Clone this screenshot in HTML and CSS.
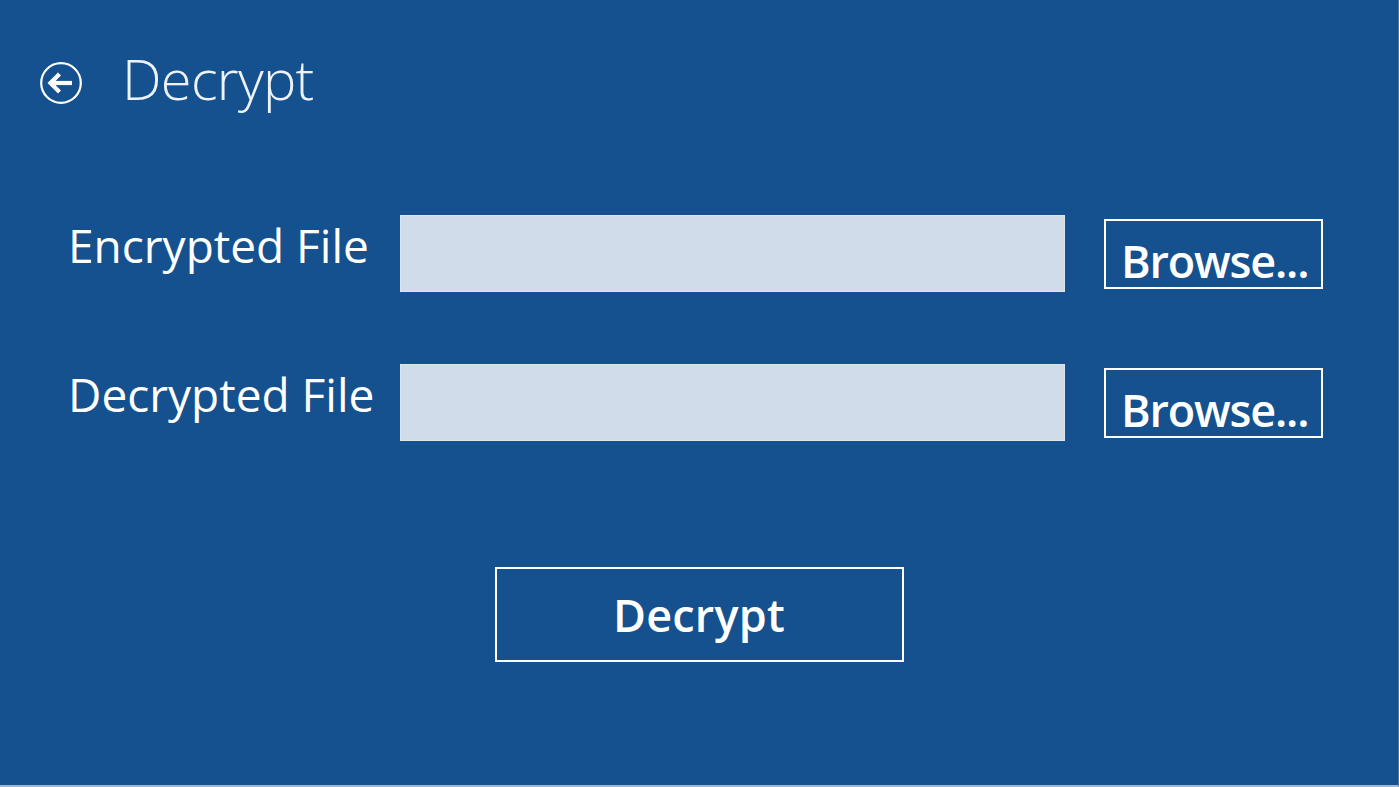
FILE: index.html
```html
<!DOCTYPE html>
<html lang="en">
<head>
<meta charset="utf-8">
<title>Decrypt</title>
<link rel="stylesheet" href="styles.css">
</head>
<body>
<div class="page">
  <header class="header">
    <button class="back" aria-label="Back">
      <svg width="42" height="42" viewBox="0 0 42 42">
        <circle cx="21" cy="21" r="19.8" fill="none" stroke="#fff" stroke-width="2.2"/>
        <path d="M11 21 H32" stroke="#fff" stroke-width="4.2" fill="none"/>
        <path d="M19.5 12 L10.5 21 L19.5 30" stroke="#fff" stroke-width="4.2" fill="none" stroke-linejoin="miter"/>
      </svg>
    </button>
    <h1 class="title">Decrypt</h1>
  </header>

  <section class="form">
    <div class="row">
      <label class="label">Encrypted File</label>
      <div class="field"></div>
      <button class="browse"><span class="browse-text">Browse...</span></button>
    </div>
    <div class="row">
      <label class="label">Decrypted File</label>
      <div class="field"></div>
      <button class="browse"><span class="browse-text">Browse...</span></button>
    </div>
  </section>

  <div class="actions">
    <button class="primary">Decrypt</button>
  </div>
</div>
</body>
</html>
```

FILE: styles.css
```css
* {
  box-sizing: border-box;
}

html, body {
  margin: 0;
  padding: 0;
}

body {
  background: #15518e;
  font-family: "Open Sans", "Noto Sans", "Liberation Sans", sans-serif;
  color: #ffffff;
}

.page {
  width: 1399px;
  height: 787px;
  overflow: hidden;
  border-right: 1px solid #4a78a8;
  border-bottom: 2px solid #9db8d6;
}

.header {
  display: flex;
  align-items: flex-start;
  padding: 62px 0 0 40px;
  gap: 40px;
  height: 104px;
}

.back {
  width: 42px;
  height: 42px;
  padding: 0;
  margin: 0;
  border: 0;
  background: transparent;
  display: block;
}

.back svg {
  display: block;
}

.title {
  margin: -5px 0 0 0;
  font-size: 56px;
  font-weight: 300;
  line-height: 42px;
  letter-spacing: -0.7px;
  color: #eef3f9;
}

.form {
  display: flex;
  flex-direction: column;
  gap: 72px;
  padding: 111px 0 0 68px;
}

.row {
  display: flex;
  height: 77px;
}

.label {
  width: 332px;
  flex: none;
  align-self: flex-start;
  margin-top: 7px;
  font-size: 46px;
  line-height: 46px;
  font-weight: 400;
  white-space: nowrap;
}

.field {
  width: 665px;
  height: 77px;
  flex: none;
  background: #d0dcea;
  border: 1px solid #dde6f0;
}

.browse {
  flex: none;
  align-self: center;
  margin-left: 39px;
  width: 219px;
  height: 70px;
  padding: 0 0 0 15px;
  border: 2px solid #ffffff;
  background: transparent;
  color: #ffffff;
  font-family: inherit;
  display: flex;
  align-items: flex-start;
}

.browse-text {
  display: block;
  width: 187px;
  height: 47px;
  margin-top: 16px;
  overflow: hidden;
  white-space: nowrap;
  font-size: 45px;
  line-height: 47px;
  font-weight: 600;
  letter-spacing: -1.2px;
  text-align: left;
}

.actions {
  display: flex;
  justify-content: center;
  padding-top: 126px;
}

.primary {
  width: 409px;
  height: 95px;
  padding: 0;
  border: 2px solid #ffffff;
  background: transparent;
  color: #ffffff;
  font-family: inherit;
  font-size: 45px;
  line-height: 45px;
  font-weight: 600;
  text-align: center;
  letter-spacing: 0.2px;
}
```
